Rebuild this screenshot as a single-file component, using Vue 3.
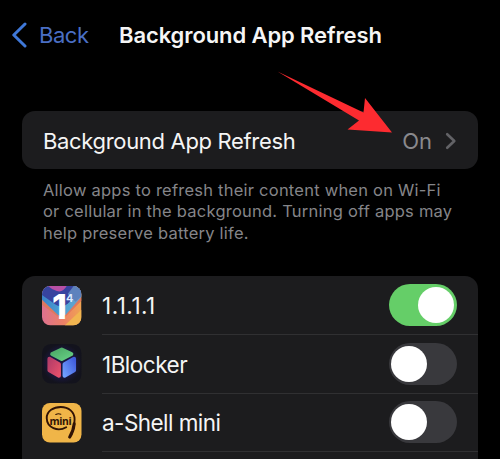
<script setup>
import { ref } from 'vue'

const apps = ref([
  { name: '1.1.1.1', icon: 'dns', on: true },
  { name: '1Blocker', icon: 'cube', on: false },
  { name: 'a-Shell mini', icon: 'shell', on: false },
])
</script>

<template>
  <main class="screen">
    <header class="nav">
      <a class="back">
        <svg class="back-icon" width="16" height="26" viewBox="0 0 16 26" fill="none">
          <path d="M14 2 2.800 13 14 24" stroke="#3f78d8" stroke-width="3" stroke-linecap="round" stroke-linejoin="round" />
        </svg>
        <span class="back-label">Back</span>
      </a>
      <h1 class="title">Background App Refresh</h1>
    </header>

    <section class="card setting">
      <span class="setting-label">Background App Refresh</span>
      <span class="setting-value">On</span>
      <svg class="chevron" width="12" height="18" viewBox="0 0 12 18" fill="none">
        <path d="M2.200 2.200 9.300 9l-7.100 6.800" stroke="#626266" stroke-width="2.600" stroke-linecap="round" stroke-linejoin="round" />
      </svg>
      <svg class="arrow" width="116" height="64" viewBox="0 0 116 64">
        <path d="M.5.500 86.500 41.500 88 27l27 34.500-44.500-3L82 49.500z" fill="#fd2b30" />
      </svg>
    </section>

    <p class="note">
      Allow apps to refresh their content when on Wi-Fi<br />
      or cellular in the background. Turning off apps may<br />
      help preserve battery life.
    </p>

    <ul class="card list">
      <li v-for="app in apps" :key="app.name" class="row">
        <svg v-if="app.icon === 'dns'" class="icon" viewBox="0 0 40 40">
          <defs>
            <clipPath id="dns-clip"><rect width="40" height="40" rx="8.500" /></clipPath>
            <linearGradient id="dns-warm" x1="0" y1="0" x2="1" y2="0">
              <stop offset="0" stop-color="#dd7190" />
              <stop offset="0.550" stop-color="#ec8166" />
              <stop offset="1" stop-color="#f0a452" />
            </linearGradient>
            <linearGradient id="dns-cool" x1="0" y1="0" x2="1" y2="0">
              <stop offset="0" stop-color="#3a83c9" />
              <stop offset="0.600" stop-color="#50a5d3" />
              <stop offset="1" stop-color="#6c9fcd" />
            </linearGradient>
          </defs>
          <g clip-path="url(#dns-clip)">
            <rect width="40" height="40" fill="url(#dns-warm)" />
            <path d="M23 40 40 24v16z" fill="#f1b550" />
            <path d="M0 0h40v15L24 31q-4 3-8 0L0 19z" fill="#df785f" />
            <path d="M0 0h40v11L24 29q-4 3-8 0L0 14z" fill="url(#dns-cool)" />
            <path d="M0 0h32l8 4-14 14q-6 5-12 1L0 9z" fill="#37439f" />
            <path d="M32 0h8v10l-6 6-8-8z" fill="#5d82bd" />
            <path d="M6 0h19q-4 7-10 5T6 0z" fill="#b850a5" />
          </g>
          <text x="10" y="33.500" class="dns-one">1</text>
          <text x="24.300" y="16.500" class="dns-four">4</text>
        </svg>

        <svg v-else-if="app.icon === 'cube'" class="icon" viewBox="0 0 40 40">
          <defs>
            <linearGradient id="cube-top" x1="0" y1="0" x2="1" y2="1">
              <stop offset="0" stop-color="#4ba866" />
              <stop offset="1" stop-color="#66cf83" />
            </linearGradient>
            <linearGradient id="cube-left" x1="0" y1="0" x2="1" y2="1">
              <stop offset="0" stop-color="#b43c68" />
              <stop offset="1" stop-color="#e6506c" />
            </linearGradient>
            <linearGradient id="cube-right" x1="0" y1="1" x2="1" y2="0">
              <stop offset="0" stop-color="#70a0ff" />
              <stop offset="1" stop-color="#405bdc" />
            </linearGradient>
            <radialGradient id="cube-glow">
              <stop offset="0.600" stop-color="#1b1842" />
              <stop offset="1" stop-color="#13131d" />
            </radialGradient>
          </defs>
          <rect width="40" height="40" rx="9" fill="url(#cube-glow)" />
          <g stroke-width="4" stroke-linejoin="round">
            <path d="M20 5.500 29.700 10.200 20 15.200 10.300 10.200z" fill="url(#cube-top)" stroke="url(#cube-top)" />
            <path d="M7.500 15 17.200 20.400v11.800L7.500 26.600z" fill="url(#cube-left)" stroke="url(#cube-left)" />
            <path d="M32.500 15 22.800 20.400v11.800l9.700-5.600z" fill="url(#cube-right)" stroke="url(#cube-right)" />
          </g>
        </svg>

        <svg v-else class="icon" viewBox="0 0 40 40">
          <rect width="40" height="40" rx="8" fill="#f0b548" />
          <g fill="none" stroke="#301305" stroke-linecap="round">
            <path d="M24.500 24.500C16 29.500 5 25 4.800 15.500 4.600 8 12 4 19 4c8 0 14 5 14 12.500 0 7-1.500 13-5 18" stroke-width="1.900" />
            <path d="M32.600 21c-.6 5.500-2 9.500-4.600 13.500" stroke-width="3" />
            <path d="M14 11.600q2.500-1.300 5-.2" stroke-width="1.200" />
          </g>
          <text x="7.600" y="22.200" textLength="22.500" class="mini">mini</text>
        </svg>

        <div class="row-body">
          <span class="app-name" :class="app.icon">{{ app.name }}</span>
          <button
            class="switch"
            :class="{ on: app.on }"
            role="switch"
            :aria-checked="app.on"
            @click="app.on = !app.on"
          >
            <span class="knob"></span>
          </button>
        </div>
      </li>
    </ul>
  </main>
</template>

<style>
body {
  background: #000;
}
</style>

<style scoped>
.screen {
  box-sizing: border-box;
  width: 500px;
  height: 459px;
  overflow: hidden;
  padding: 0 22px 0 21.500px;
  background: #000;
  color: #f5f5f5;
  font-family: Inter, "Liberation Sans", sans-serif;
  font-size: 22px;
}

.nav {
  display: flex;
  align-items: center;
  height: 70px;
  margin-left: -10.500px;
}

.back {
  display: flex;
  align-items: center;
  width: 108px;
  color: #4a6fc4;
}

.back-label {
  margin-left: 12px;
  letter-spacing: -0.450px;
}

.title {
  margin: 0;
  font-size: 22px;
  font-weight: 600;
  letter-spacing: -0.100px;
  white-space: nowrap;
}

.card {
  background: #1c1c1e;
}

.setting {
  position: relative;
  display: flex;
  align-items: center;
  box-sizing: border-box;
  height: 58px;
  margin-top: 41px;
  padding: 1px 21px 0 21.500px;
  border-radius: 13px;
}

.setting-label {
  flex: 1;
  letter-spacing: -0.330px;
  white-space: nowrap;
}

.setting-value {
  color: #89898d;
}

.chevron {
  margin-left: 13px;
}

.arrow {
  position: absolute;
  top: -40px;
  right: 85px;
}

.note {
  height: 96px;
  margin: 11px 0 0 21.500px;
  color: #858589;
  font-size: 16.500px;
  line-height: 21.400px;
  letter-spacing: 0.230px;
  white-space: nowrap;
}

.list {
  margin: 0;
  padding: 0;
  height: 200px;
  border-radius: 13px 13px 0 0;
  list-style: none;
}

.row {
  display: flex;
  align-items: center;
  height: 58.800px;
  padding-left: 20.500px;
}

.icon {
  flex: none;
  width: 39.500px;
  height: 39.500px;
  overflow: visible;
}

.dns-one {
  font-size: 34px;
  font-weight: 800;
  fill: #fff;
}

.dns-four {
  font-size: 11px;
  font-weight: 700;
  fill: #d9eaff;
}

.mini {
  font-family: "Open Sans", "Noto Sans", sans-serif;
  font-size: 10.500px;
  font-weight: 700;
  fill: #301305;
}

.row-body {
  display: flex;
  flex: 1;
  align-items: center;
  justify-content: space-between;
  box-sizing: border-box;
  height: 100%;
  margin-left: 20.500px;
  padding-right: 21.500px;
  border-bottom: 1px solid #303032;
}

.app-name {
  padding-top: 1px;
  font-size: 22.500px;
}

.app-name.dns {
  letter-spacing: 0.500px;
}

.app-name.cube {
  letter-spacing: -0.500px;
}

.app-name.shell {
  letter-spacing: -0.550px;
}

.switch {
  box-sizing: border-box;
  width: 68px;
  height: 42px;
  padding: 3px 2px;
  border: 0;
  border-radius: 21px;
  background: #39393d;
}

.knob {
  display: block;
  width: 36px;
  height: 36px;
  border-radius: 50%;
  background: #fff;
}

.switch.on {
  background: #65ce68;
}

.switch.on .knob {
  margin-left: 27px;
}
</style>
